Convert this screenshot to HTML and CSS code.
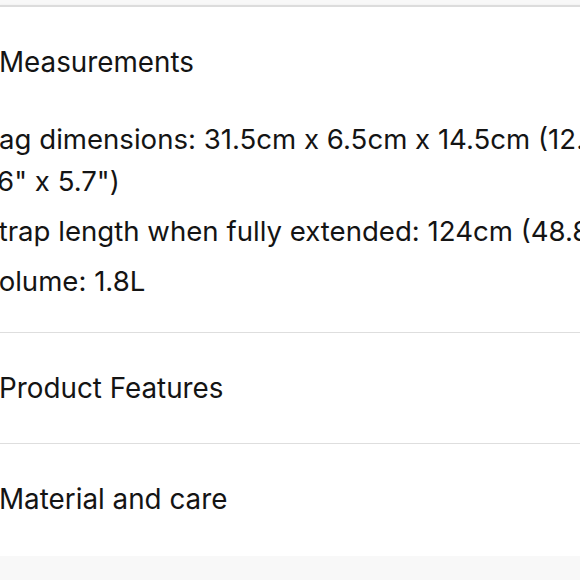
FILE: index.html
```html
<!DOCTYPE html>
<html lang="en">
<head>
<meta charset="utf-8">
<title>Product details</title>
<link rel="stylesheet" href="styles.css">
</head>
<body>
<div class="page">
  <div class="accordion">
    <section class="panel open">
      <h2 class="panel-title">Measurements</h2>
      <ul class="specs">
        <li>Bag dimensions: 31.5cm x 6.5cm x 14.5cm (12.4" x 2.6" x 5.7")</li>
        <li>Strap length when fully extended: 124cm (48.8")</li>
        <li>Volume: 1.8L</li>
      </ul>
    </section>
    <section class="panel">
      <h2 class="panel-title">Product Features</h2>
    </section>
    <section class="panel last">
      <h2 class="panel-title">Material and care</h2>
    </section>
  </div>
</div>
</body>
</html>
```
FILE: styles.css
```css
html, body {
  margin: 0;
  padding: 0;
  background: #f8f8f8;
  overflow: hidden;
}
body {
  font-family: Inter, "Liberation Sans", sans-serif;
  color: #141414;
}
.page {
  padding-top: 5px;
}
.accordion {
  background: #fff;
  border-top: 2px solid #dcdcdc;
  box-shadow: 0 1px 1px rgba(0, 0, 0, 0.25), 0 2px 4px rgba(0, 0, 0, 0.15);
  margin-left: -1px;
  width: 720px;
}
.panel {
  padding: 37px 0;
  border-top: 1px solid #dedede;
}
.panel:first-child {
  border-top: none;
}
.panel.open {
  padding-bottom: 30px;
}
.panel.last {
  padding-bottom: 39px;
}
.panel-title {
  margin: 0;
  font-weight: 400;
  font-size: 27.8px;
  line-height: 36px;
}
.specs {
  list-style: none;
  margin: 38px 0 0 -26px;
  padding: 0;
  width: 690px;
}
.specs li {
  font-size: 27.6px;
  line-height: 42px;
  margin-bottom: 8px;
  text-indent: 8px;
}
.specs li:last-child {
  margin-bottom: 0;
}
```
